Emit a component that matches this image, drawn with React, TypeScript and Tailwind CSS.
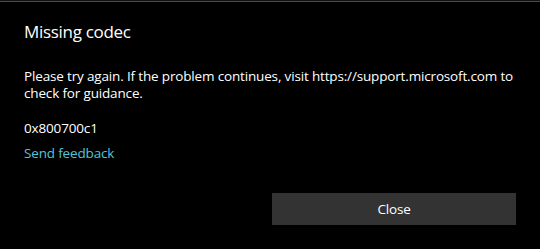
import React from "react";

export default function App() {
  return (
    <div
      className="w-[540px] h-[249px] bg-black text-white overflow-hidden"
      style={{ fontFamily: '"Open Sans", "Noto Sans", sans-serif' }}
    >
      <div className="h-px bg-[#111]" />
      <div className="h-px bg-[#4a4a4a]" />
      <div className="flex flex-col pl-[24px] pr-[20px]">
        <div className="mt-[18px] text-[17px] leading-[24px] tracking-[-0.3px]">Missing codec</div>
        <div className="mt-[24px] text-[13.5px] leading-[17px] tracking-[-0.16px] whitespace-nowrap">
          Please try again. If the problem continues, visit https://support.microsoft.com to
          <br />
          check for guidance.
        </div>
        <div className="mt-[16px] text-[13.5px] leading-[20px] tracking-[-0.16px]">0x800700c1</div>
        <div className="mt-[5px] text-[13.5px] leading-[20px] tracking-[-0.16px] text-[#50c6da]">Send feedback</div>
        <div className="mt-[30px] flex justify-end pr-[4px]">
          <div className="w-[244px] h-[32px] bg-[#333333] flex items-center justify-center text-[13.5px] tracking-[-0.16px]">
            Close
          </div>
        </div>
      </div>
    </div>
  );
}
